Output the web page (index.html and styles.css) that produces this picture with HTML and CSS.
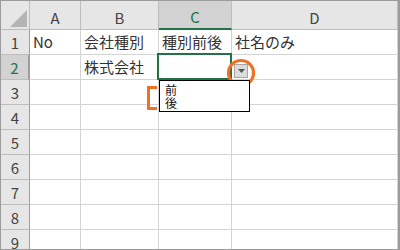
FILE: index.html
```html
<!DOCTYPE html>
<html lang="ja">

<head>
  <meta charset="UTF-8">
  <title>入力規則</title>
  <link rel="stylesheet" href="styles.css">
</head>

<body>
  <div class="sheet">
    <div class="grid">
      <!-- header row -->
      <div class="hd corner"><span class="corner-tri"></span></div>
      <div class="hd col">A</div>
      <div class="hd col">B</div>
      <div class="hd col sel-col">C</div>
      <div class="hd col">D</div>

      <div class="hd row">1</div>
      <div class="cell">No</div>
      <div class="cell">会社種別</div>
      <div class="cell">種別前後</div>
      <div class="cell">社名のみ</div>

      <div class="hd row sel-row">2</div>
      <div class="cell"></div>
      <div class="cell">株式会社</div>
      <div class="cell active"></div>
      <div class="cell"></div>

      <div class="hd row">3</div>
      <div class="cell"></div><div class="cell"></div><div class="cell"></div><div class="cell"></div>
      <div class="hd row">4</div>
      <div class="cell"></div><div class="cell"></div><div class="cell"></div><div class="cell"></div>
      <div class="hd row">5</div>
      <div class="cell"></div><div class="cell"></div><div class="cell"></div><div class="cell"></div>
      <div class="hd row">6</div>
      <div class="cell"></div><div class="cell"></div><div class="cell"></div><div class="cell"></div>
      <div class="hd row">7</div>
      <div class="cell"></div><div class="cell"></div><div class="cell"></div><div class="cell"></div>
      <div class="hd row">8</div>
      <div class="cell"></div><div class="cell"></div><div class="cell"></div><div class="cell"></div>
      <div class="hd row">9</div>
      <div class="cell"></div><div class="cell"></div><div class="cell"></div><div class="cell"></div>
    </div>

    <!-- dropdown over the grid -->
    <div class="drop-btn">
      <svg width="7" height="4" viewBox="0 0 7 4"><path d="M0 0h7L3.5 4z" fill="#555"/></svg>
    </div>
    <svg class="ring" width="32" height="32" viewBox="0 0 32 32">
      <circle cx="16" cy="16" r="12.5" fill="none" stroke="#f07024" stroke-width="3.2"/>
    </svg>
    <ul class="drop-list">
      <li>前</li>
      <li>後</li>
    </ul>
    <div class="bracket"></div>
  </div>
</body>

</html>
```

FILE: styles.css
```css
* {
  margin: 0;
  padding: 0;
  box-sizing: border-box;
}

body {
  font-family: 'Noto Sans CJK JP', sans-serif;
  background: #fff;
  color: #333;
}

.sheet {
  position: relative;
  width: 400px;
  height: 250px;
  border: 1px solid #9c9c9c;
  border-right-width: 2px;
  overflow: hidden;
}

.grid {
  display: grid;
  grid-template-columns: 29px 51px 78px 73px 1fr;
  grid-template-rows: 29px repeat(9, 25px);
}

.cell {
  border-right: 1px solid #d4d4d4;
  border-bottom: 1px solid #d4d4d4;
  font-size: 15px;
  line-height: 24px;
  padding-left: 3px;
  white-space: nowrap;
  position: relative;
}

.hd {
  background: #e6e6e6;
  border-right: 1px solid #bdbdbd;
  border-bottom: 1px solid #bdbdbd;
  color: #444;
  font-size: 15px;
  display: flex;
  justify-content: center;
  align-items: center;
}

.hd.col {
  padding-top: 4px;
}

.hd.row {
  padding-top: 1px;
  border-right-color: #9c9c9c;
}

.corner {
  position: relative;
}

.corner-tri {
  position: absolute;
  right: 2px;
  bottom: 2px;
  width: 0;
  height: 0;
  border-left: 17px solid transparent;
  border-bottom: 17px solid #b4b4b4;
}

.sel-col {
  background: #d2d2d2;
  color: #217346;
  border-bottom: 2px solid #217346;
}

.sel-row {
  background: #d2d2d2;
  color: #217346;
  border-right: 2px solid #217346;
}

.active::after {
  content: '';
  position: absolute;
  left: -2px;
  top: -2px;
  right: -1px;
  bottom: -1px;
  border: 2px solid #217346;
}

.drop-btn {
  position: absolute;
  left: 233px;
  top: 63px;
  width: 14px;
  height: 14px;
  background: #dcdcdc;
  border: 1px solid #a6a6a6;
  display: flex;
  align-items: center;
  justify-content: center;
}

.ring {
  position: absolute;
  left: 224px;
  top: 56px;
}

.drop-list {
  position: absolute;
  left: 158px;
  top: 79px;
  width: 91px;
  height: 32px;
  background: #fff;
  border: 1px solid #000;
  list-style: none;
  padding: 2px 0 0 5px;
  font-size: 12px;
  line-height: 13px;
  color: #111;
}

.bracket {
  position: absolute;
  left: 146px;
  top: 85px;
  width: 10px;
  height: 24px;
  border: 3px solid #f07024;
  border-right: none;
}
```
